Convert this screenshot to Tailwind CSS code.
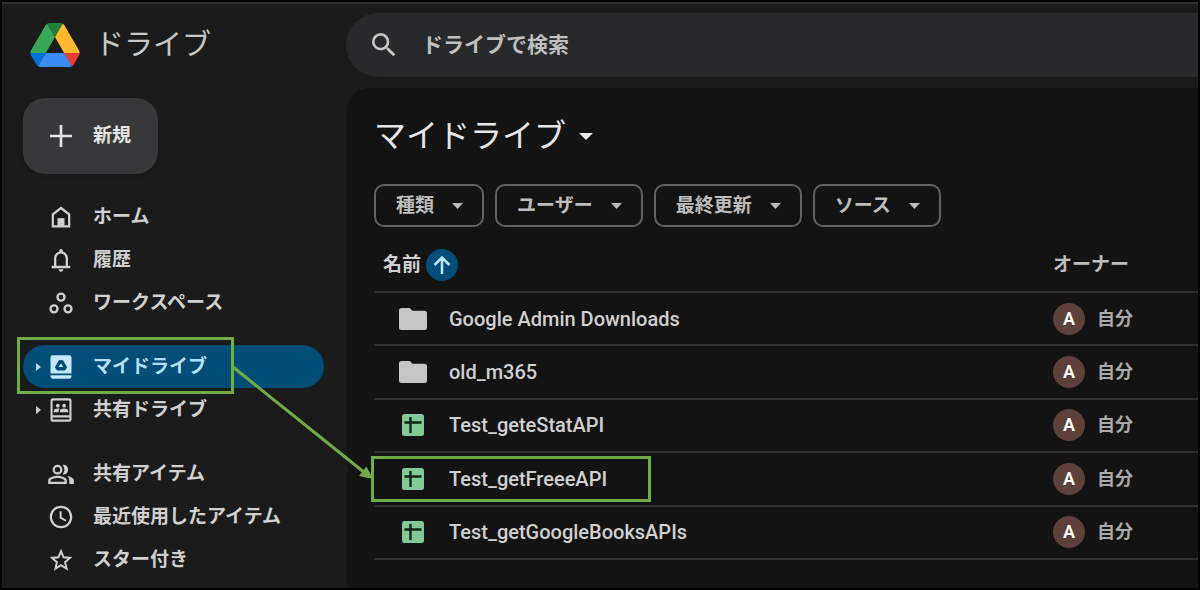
<!DOCTYPE html>
<html lang="ja">
<head>
    <meta charset="UTF-8">
    <meta name="viewport" content="width=device-width, initial-scale=1.0">
    <title>マイドライブ</title>
    <script src="https://cdn.jsdelivr.net/npm/@tailwindcss/browser@4"></script>
</head>
<body class="relative flex h-screen overflow-hidden border-2 border-black bg-[#1b1b1b] font-['Roboto','Noto_Sans_CJK_JP',sans-serif] text-[19px] font-semibold leading-6 text-[#d0d0d0]">

    <!-- Sidebar -->
    <aside class="flex w-[344px] shrink-0 flex-col border-t-2 border-[#303131]">
        <a href="#" class="flex h-[73px] shrink-0 items-center gap-[15px] pl-7 pt-2">
            <svg class="h-11 w-[50px]" viewBox="0 0 87.3 78" aria-hidden="true">
                <path fill="#0071d8" d="m6.6 66.85 3.85 6.65c.8 1.4 1.95 2.5 3.3 3.3l13.75-23.8h-27.5c0 1.55.4 3.1 1.2 4.5z"/>
                <path fill="#38a757" d="m43.65 25-13.75-23.8c-1.35.8-2.5 1.9-3.3 3.3l-25.4 44a9.06 9.06 0 0 0-1.2 4.5h27.5z"/>
                <path fill="#ea3c35" d="m73.55 76.8c1.35-.8 2.5-1.9 3.3-3.3l1.6-2.75 7.65-13.25c.8-1.4 1.2-2.95 1.2-4.5h-27.5l5.85 11.5z"/>
                <path fill="#218038" d="m43.65 25 13.75-23.8c-1.35-.8-2.9-1.2-4.5-1.2h-18.5c-1.6 0-3.15.45-4.5 1.2z"/>
                <path fill="#3b8cf2" d="m59.8 53h-32.3l-13.75 23.8c1.35.8 2.9 1.2 4.5 1.2h50.8c1.6 0 3.15-.45 4.5-1.2z"/>
                <path fill="#ffb92e" d="m73.4 26.5-12.7-22c-.8-1.4-1.95-2.5-3.3-3.3l-13.75 23.8 16.15 28h27.45c0-1.55-.4-3.1-1.2-4.5z"/>
            </svg>
            <span class="text-[29px] font-normal text-[#c8c8c8]">ドライブ</span>
        </a>

        <button type="button" class="ml-[21px] mt-[21px] flex h-[76px] w-[135px] shrink-0 items-center gap-5 rounded-[22px] bg-[#37383a] pl-[26px] text-[#e4e4e4] shadow-md">
            <svg class="size-6" viewBox="0 0 24 24" fill="none" stroke="currentColor" stroke-width="2.6" aria-hidden="true"><path d="M12 1v22M1 12h22"/></svg>
            新規
        </button>

        <nav class="mt-[21px] flex flex-col gap-[21px] pl-[21px] pr-[22px]">
            <div>
                <a href="#" class="flex h-[43px] items-center gap-[18px] pl-6">
                    <svg class="size-7" viewBox="0 0 24 24" aria-hidden="true"><path fill="none" stroke="currentColor" stroke-width="1.9" d="M5 20V9.7l7-5.4 7 5.4V20z"/><path fill="currentColor" d="M9 13h6v7H9z"/></svg>
                    ホーム
                </a>
                <a href="#" class="flex h-[43px] items-center gap-[18px] pl-6">
                    <svg class="size-7" viewBox="0 0 24 24" fill="currentColor" aria-hidden="true"><path d="M12 22c1.1 0 2-.9 2-2h-4c0 1.1.9 2 2 2zm6-5v-6c0-3.07-1.63-5.64-4.5-6.32V4c0-.83-.67-1.5-1.5-1.5s-1.5.67-1.5 1.5v.68C7.64 5.36 6 7.92 6 11v6H4v2h16v-2h-2zm-2 0H8v-6c0-2.48 1.51-4.5 4-4.5s4 2.02 4 4.5v6z"/></svg>
                    履歴
                </a>
                <a href="#" class="flex h-[43px] items-center gap-[18px] pl-6">
                    <svg class="size-7" viewBox="0 0 24 24" fill="none" stroke="currentColor" stroke-width="2" aria-hidden="true"><circle cx="12" cy="7" r="3"/><circle cx="6" cy="17" r="3"/><circle cx="18" cy="17" r="3"/></svg>
                    ワークスペース
                </a>
            </div>
            <div>
                <a href="#" class="relative flex h-[43px] items-center rounded-full bg-[#004d77] pl-[13px] text-[#b5def5]">
                    <svg class="mr-[6px] h-2 w-[5px]" viewBox="0 0 5 8" fill="currentColor" aria-hidden="true"><path d="M0 0l5 4-5 4z"/></svg>
                    <svg class="mr-[18px] size-7" viewBox="0 0 24 24" aria-hidden="true"><path fill="#c2e7ff" d="M4.800 2h14.400a1.800 1.800 0 0 1 1.800 1.800V17.500H3V3.800A1.800 1.800 0 0 1 4.800 2zM3 19h18v1.200a1.800 1.800 0 0 1-1.800 1.800H4.800A1.800 1.800 0 0 1 3 20.200z"/><path fill="none" stroke="#004d77" stroke-width="2.800" stroke-linejoin="round" d="M11.200 7.400h1.600l2.900 4.800-.8 1.300H9.100l-.8-1.300z"/></svg>
                    マイドライブ
                    <span class="absolute -left-[6px] -top-2 h-[57px] w-[217px] border-[3px] border-[#70ad47]"></span>
                </a>
                <a href="#" class="flex h-[43px] items-center pl-[13px]">
                    <svg class="mr-[6px] h-2 w-[5px]" viewBox="0 0 5 8" fill="currentColor" aria-hidden="true"><path d="M0 0l5 4-5 4z"/></svg>
                    <svg class="mr-[18px] size-7" viewBox="0 0 24 24" aria-hidden="true"><path fill="none" stroke="currentColor" stroke-width="1.800" d="M4.900 2.900h14.200a1 1 0 0 1 1 1v16.200a1 1 0 0 1-1 1H4.900a1 1 0 0 1-1-1V3.900a1 1 0 0 1 1-1zM4 17.500h16"/><g fill="currentColor"><circle cx="9.300" cy="8.300" r="1.600"/><circle cx="14.700" cy="8.300" r="1.600"/><path d="M5.800 14v-1.200c0-1.300 2-2 3.500-2 .6 0 1.100.1 1.600.3-.7.500-1 1.100-1 1.900v1zM11 14v-1.200c0-1.300 2.200-2 3.700-2s3.500.7 3.500 2V14z"/></g></svg>
                    共有ドライブ
                </a>
            </div>
            <div>
                <a href="#" class="flex h-[43px] items-center gap-[18px] pl-6">
                    <svg class="size-7" viewBox="0 0 24 24" fill="currentColor" aria-hidden="true"><path d="M9 12.500a4.200 4.200 0 1 0 0-8.400 4.200 4.200 0 0 0 0 8.400zm0-6.500a2.300 2.300 0 1 1 0 4.600A2.300 2.300 0 0 1 9 6zm0 7.500c-2.700 0-8 1.300-8 4V20.500h16v-3c0-2.700-5.300-4-8-4zm6 5.100H3v-1c0-.8 3.300-2.100 6-2.100s6 1.300 6 2.100zM14.500 12.400a4.200 4.200 0 0 0 0-8.300c-.4 0-.8.100-1.100.2a6.500 6.500 0 0 1 0 7.900c.3.100.7.200 1.100.2zM17.200 13.800c1.100.9 1.900 2.100 1.900 3.700v3H23v-3c0-2-2.900-3.200-5.800-3.700z"/></svg>
                    共有アイテム
                </a>
                <a href="#" class="flex h-[43px] items-center gap-[18px] pl-6">
                    <svg class="size-7" viewBox="0 0 24 24" fill="none" stroke="currentColor" aria-hidden="true"><circle cx="12" cy="12" r="8.700" stroke-width="1.900"/><path stroke-width="1.700" d="M11.700 7v5.500l4.500 2.700"/></svg>
                    最近使用したアイテム
                </a>
                <a href="#" class="flex h-[43px] items-center gap-[18px] pl-6">
                    <svg class="size-7" viewBox="0 0 24 24" fill="none" stroke="currentColor" stroke-width="1.700" aria-hidden="true"><path d="M12 4.500l2.200 5.200 5.500.5-4.200 3.700 1.300 5.500-4.800-2.900-4.800 2.900 1.300-5.500-4.200-3.700 5.500-.5z"/></svg>
                    スター付き
                </a>
            </div>
        </nav>
    </aside>

    <div class="flex min-w-0 flex-1 flex-col border-t-2 border-[#303131]">
        <!-- Search -->
        <form class="mt-[9px] flex h-16 shrink-0 items-center gap-[22px] rounded-l-full bg-[#28292a] pl-[22px]" role="search">
            <svg class="size-8 shrink-0 text-[#c7c7c7]" viewBox="0 0 24 24" fill="currentColor" aria-hidden="true"><path d="M15.500 14h-.79l-.28-.27A6.470 6.470 0 0 0 16 9.500 6.500 6.500 0 1 0 9.500 16c1.610 0 3.090-.59 4.230-1.570l.27.28v.79l5 4.990L20.490 19l-4.990-5zm-6 0C7.010 14 5 11.990 5 9.500S7.010 5 9.500 5 14 7.010 14 9.500 11.990 14 9.500 14z"/></svg>
            <input name="q" type="text" aria-label="ドライブで検索" placeholder="ドライブで検索" class="h-full min-w-0 flex-1 bg-transparent text-[21px] placeholder:text-[#c0c0c0] focus:outline-none">
        </form>

        <main class="ml-px mt-[11px] flex-1 rounded-tl-[22px] bg-[#131313] pl-[27px] pt-6">
            <h1>
                <button type="button" class="flex h-12 items-center gap-[13px] text-[32px] font-normal text-[#e6e6e6]">
                    マイドライブ
                    <svg class="h-[7px] w-[14px]" viewBox="0 0 14 7" fill="currentColor" aria-hidden="true"><path d="M0 0h14L7 7z"/></svg>
                </button>
            </h1>

            <div class="mt-6 flex gap-[11px] text-[#bdbdbd]">
                <button type="button" class="flex h-[43px] items-center gap-[18px] rounded-[10px] border-2 border-[#616262] pl-5 pr-[19px]">
                    種類
                    <svg class="h-[6px] w-[11px]" viewBox="0 0 11 6" fill="currentColor" aria-hidden="true"><path d="M0 0h11L5.500 6z"/></svg>
                </button>
                <button type="button" class="flex h-[43px] items-center gap-[18px] rounded-[10px] border-2 border-[#616262] pl-5 pr-[19px]">
                    ユーザー
                    <svg class="h-[6px] w-[11px]" viewBox="0 0 11 6" fill="currentColor" aria-hidden="true"><path d="M0 0h11L5.500 6z"/></svg>
                </button>
                <button type="button" class="flex h-[43px] items-center gap-[18px] rounded-[10px] border-2 border-[#616262] pl-5 pr-[19px]">
                    最終更新
                    <svg class="h-[6px] w-[11px]" viewBox="0 0 11 6" fill="currentColor" aria-hidden="true"><path d="M0 0h11L5.500 6z"/></svg>
                </button>
                <button type="button" class="flex h-[43px] items-center gap-[18px] rounded-[10px] border-2 border-[#616262] pl-5 pr-[19px]">
                    ソース
                    <svg class="h-[6px] w-[11px]" viewBox="0 0 11 6" fill="currentColor" aria-hidden="true"><path d="M0 0h11L5.500 6z"/></svg>
                </button>
            </div>

            <!-- File list -->
            <table class="mt-[11px] h-[322px] w-full table-fixed text-left">
                <thead>
                    <tr class="h-[54px] border-b-2 border-[#2f3030]">
                        <th scope="col" class="pl-[9px] font-semibold">
                            <span class="flex items-center gap-[5px]">
                                名前
                                <button type="button" aria-label="並べ替え" class="flex size-8 items-center justify-center rounded-full bg-[#004d77] text-[#c2e7ff]">
                                    <svg class="size-5" viewBox="0 0 20 20" fill="none" stroke="currentColor" stroke-width="2.500" aria-hidden="true"><path d="M10 19V2.500M2.500 10L10 2.500l7.500 7.500"/></svg>
                                </button>
                            </span>
                        </th>
                        <th scope="col" class="w-[145px] font-semibold text-[#bdbdbd]">オーナー</th>
                    </tr>
                </thead>
                <tbody>
                    <tr class="border-b-2 border-[#2f3030]">
                        <td class="pl-[25px]">
                            <a href="#" class="flex items-center gap-[22px] text-xl/6 font-medium">
                                <svg class="h-[22px] w-7" viewBox="0 0 28 22" fill="#c4c7c5" aria-hidden="true"><path d="M2.500 0h8.300l2.700 2.700h12A2.500 2.500 0 0 1 28 5.200v14.300a2.500 2.500 0 0 1-2.500 2.500h-23A2.500 2.500 0 0 1 0 19.500v-17A2.500 2.500 0 0 1 2.500 0z"/></svg>
                                Google Admin Downloads
                            </a>
                        </td>
                        <td>
                            <span class="flex items-center gap-3 text-[18px] text-[#a9a9a9]"><span class="flex size-8 items-center justify-center rounded-full bg-[#5d4037] text-white">A</span>自分</span>
                        </td>
                    </tr>
                    <tr class="border-b-2 border-[#2f3030]">
                        <td class="pl-[25px]">
                            <a href="#" class="flex items-center gap-[22px] text-xl/6 font-medium">
                                <svg class="h-[22px] w-7" viewBox="0 0 28 22" fill="#c4c7c5" aria-hidden="true"><path d="M2.500 0h8.300l2.700 2.700h12A2.500 2.500 0 0 1 28 5.200v14.300a2.500 2.500 0 0 1-2.500 2.500h-23A2.500 2.500 0 0 1 0 19.500v-17A2.500 2.500 0 0 1 2.500 0z"/></svg>
                                old_m365
                            </a>
                        </td>
                        <td>
                            <span class="flex items-center gap-3 text-[18px] text-[#a9a9a9]"><span class="flex size-8 items-center justify-center rounded-full bg-[#5d4037] text-white">A</span>自分</span>
                        </td>
                    </tr>
                    <tr class="border-b-2 border-[#2f3030]">
                        <td class="pl-[25px]">
                            <a href="#" class="flex items-center gap-[22px] text-xl/6 font-medium">
                                <svg class="h-[22px] w-7" viewBox="0 0 28 22" aria-hidden="true"><rect x="3" width="22" height="22" rx="2.500" fill="#81c995"/><path fill="none" stroke="#17211a" stroke-width="2.400" d="M5.500 8.500h17M11.500 3v16"/></svg>
                                Test_geteStatAPI
                            </a>
                        </td>
                        <td>
                            <span class="flex items-center gap-3 text-[18px] text-[#a9a9a9]"><span class="flex size-8 items-center justify-center rounded-full bg-[#5d4037] text-white">A</span>自分</span>
                        </td>
                    </tr>
                    <tr class="border-b-2 border-[#2f3030]">
                        <td class="pl-[25px]">
                            <a href="#" class="relative flex items-center gap-[22px] text-xl/6 font-medium">
                                <svg class="h-[22px] w-7" viewBox="0 0 28 22" aria-hidden="true"><rect x="3" width="22" height="22" rx="2.500" fill="#81c995"/><path fill="none" stroke="#17211a" stroke-width="2.400" d="M5.500 8.500h17M11.500 3v16"/></svg>
                                Test_getFreeeAPI
                                <span class="absolute -left-7 -top-[11px] h-[46px] w-[280px] border-[3px] border-[#70ad47]"></span>
                            </a>
                        </td>
                        <td>
                            <span class="flex items-center gap-3 text-[18px] text-[#a9a9a9]"><span class="flex size-8 items-center justify-center rounded-full bg-[#5d4037] text-white">A</span>自分</span>
                        </td>
                    </tr>
                    <tr class="border-b-2 border-[#2f3030]">
                        <td class="pl-[25px]">
                            <a href="#" class="flex items-center gap-[22px] text-xl/6 font-medium">
                                <svg class="h-[22px] w-7" viewBox="0 0 28 22" aria-hidden="true"><rect x="3" width="22" height="22" rx="2.500" fill="#81c995"/><path fill="none" stroke="#17211a" stroke-width="2.400" d="M5.500 8.500h17M11.500 3v16"/></svg>
                                Test_getGoogleBooksAPIs
                            </a>
                        </td>
                        <td>
                            <span class="flex items-center gap-3 text-[18px] text-[#a9a9a9]"><span class="flex size-8 items-center justify-center rounded-full bg-[#5d4037] text-white">A</span>自分</span>
                        </td>
                    </tr>
                </tbody>
            </table>
        </main>
    </div>

    <!-- Arrow from the folder to the file -->
    <svg class="pointer-events-none absolute left-[231px] top-[362px] h-[118px] w-[140px]" viewBox="0 0 140 118" aria-hidden="true">
        <path fill="none" stroke="#70ad47" stroke-width="3" d="M0 3l132 106"/>
        <path fill="#70ad47" d="M140 115l-14-3 7.500-9.500z"/>
    </svg>
</body>
</html>
